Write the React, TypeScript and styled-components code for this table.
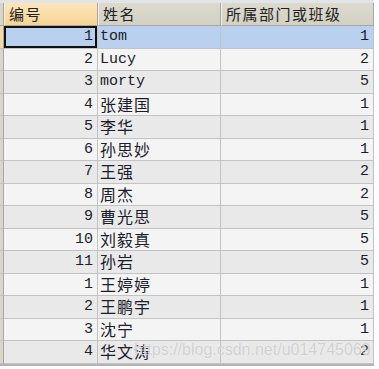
import React from "react";
import styled, { createGlobalStyle } from "styled-components";

const Global = createGlobalStyle`
  html, body { margin: 0; padding: 0; background: #ffffff; }
  body { width: 379px; height: 369px; overflow: hidden; }
`;

type Row = { id: number; name: string; dept: number; cjk: boolean };

const rows: Row[] = [
  { id: 1, name: "tom", dept: 1, cjk: false },
  { id: 2, name: "Lucy", dept: 2, cjk: false },
  { id: 3, name: "morty", dept: 5, cjk: false },
  { id: 4, name: "张建国", dept: 1, cjk: true },
  { id: 5, name: "李华", dept: 1, cjk: true },
  { id: 6, name: "孙思妙", dept: 1, cjk: true },
  { id: 7, name: "王强", dept: 2, cjk: true },
  { id: 8, name: "周杰", dept: 2, cjk: true },
  { id: 9, name: "曹光思", dept: 5, cjk: true },
  { id: 10, name: "刘毅真", dept: 5, cjk: true },
  { id: 11, name: "孙岩", dept: 5, cjk: true },
  { id: 1, name: "王婷婷", dept: 1, cjk: true },
  { id: 2, name: "王鹏宇", dept: 1, cjk: true },
  { id: 3, name: "沈宁", dept: 1, cjk: true },
  { id: 4, name: "华文涛", dept: 2, cjk: true },
];

const Frame = styled.div`
  position: relative;
  width: 379px;
  height: 369px;
  background: #ffffff;
  overflow: hidden;
`;

const Grid = styled.div`
  display: grid;
  grid-template-columns: 4px 94px 123px 153px;
  grid-auto-rows: 22.5px;
  grid-template-rows: 3px 23px;
  width: 374px;
  border-bottom: 2px solid #b4b4b4;
  background: #f6f6f6;
`;

const TopStrip = styled.div`
  grid-column: 1 / -1;
  background: #e2e4e7;
`;

const HeadCell = styled.div<{ $active?: boolean }>`
  box-sizing: border-box;
  display: flex;
  align-items: center;
  padding: 0 0 1px 4px;
  border-right: 1px solid #a8a69e;
  border-left: 1px solid #f2f0ea;
  border-bottom: 1px solid #a8a69e;
  background: ${(p) =>
    p.$active
      ? "linear-gradient(#fbe7bd, #f7d494)"
      : "linear-gradient(#dcd9ce, #d3d0c4)"};
  font-family: "Noto Sans CJK SC", sans-serif;
  font-size: 15px;
  line-height: 18px;
  letter-spacing: 1.5px;
  color: #222222;
  white-space: nowrap;
`;

const Indicator = styled.div<{ $active?: boolean; $head?: boolean }>`
  box-sizing: border-box;
  border-right: 1px solid #a8a69e;
  border-bottom: 1px solid ${(p) => (p.$head ? "#a8a69e" : "#c4c2b8")};
  background: ${(p) =>
    p.$active ? "#f3d9a6" : p.$head ? "#d8d5ca" : "#d9d6cb"};
`;

const Cell = styled.div<{
  $sel?: boolean;
  $odd?: boolean;
  $right?: boolean;
  $cjk?: boolean;
  $focus?: boolean;
}>`
  box-sizing: border-box;
  display: flex;
  align-items: center;
  justify-content: ${(p) => (p.$right ? "flex-end" : "flex-start")};
  padding: ${(p) =>
    p.$right ? "1px 4px 0 0" : p.$cjk ? "0 0 1px 2px" : "1px 0 0 2px"};
  border-right: 1px solid #c3c3c3;
  border-bottom: 1px solid #c3c3c3;
  background: ${(p) =>
    p.$sel ? "#b9d1ee" : p.$odd ? "#e9e9e9" : "#f4f4f4"};
  box-shadow: ${(p) => (p.$focus ? "inset 0 0 0 2px #111111" : "none")};
  font-family: ${(p) =>
    p.$cjk
      ? '"Noto Sans CJK SC", sans-serif'
      : '"Liberation Mono", "Noto Sans CJK SC", monospace'};
  font-size: ${(p) => (p.$cjk ? "16px" : "15px")};
  line-height: 18px;
  letter-spacing: ${(p) => (p.$cjk ? "1px" : "0")};
  color: #1c1c2c;
  white-space: nowrap;
`;

const Watermark = styled.div`
  position: absolute;
  left: 134px;
  top: 341px;
  font-family: "Liberation Sans", Arial, sans-serif;
  font-size: 16px;
  line-height: 18px;
  color: rgba(200, 200, 200, 0.85);
  text-shadow: 0 0 1px rgba(255, 255, 255, 0.9);
  white-space: nowrap;
  pointer-events: none;
`;

export default function App() {
  return (
    <>
      <Global />
      <Frame>
        <Grid>
          <TopStrip />
          <Indicator $head />
          <HeadCell $active>编号</HeadCell>
          <HeadCell>姓名</HeadCell>
          <HeadCell>所属部门或班级</HeadCell>
          {rows.map((r, i) => {
            const sel = i === 0;
            const odd = i % 2 === 0;
            return (
              <React.Fragment key={i}>
                <Indicator $active={sel} />
                <Cell $sel={sel} $odd={odd} $right $focus={sel}>
                  {r.id}
                </Cell>
                <Cell $sel={sel} $odd={odd} $cjk={r.cjk}>
                  {r.name}
                </Cell>
                <Cell $sel={sel} $odd={odd} $right>
                  {r.dept}
                </Cell>
              </React.Fragment>
            );
          })}
        </Grid>
        <Watermark>https://blog.csdn.net/u014745069</Watermark>
      </Frame>
    </>
  );
}
